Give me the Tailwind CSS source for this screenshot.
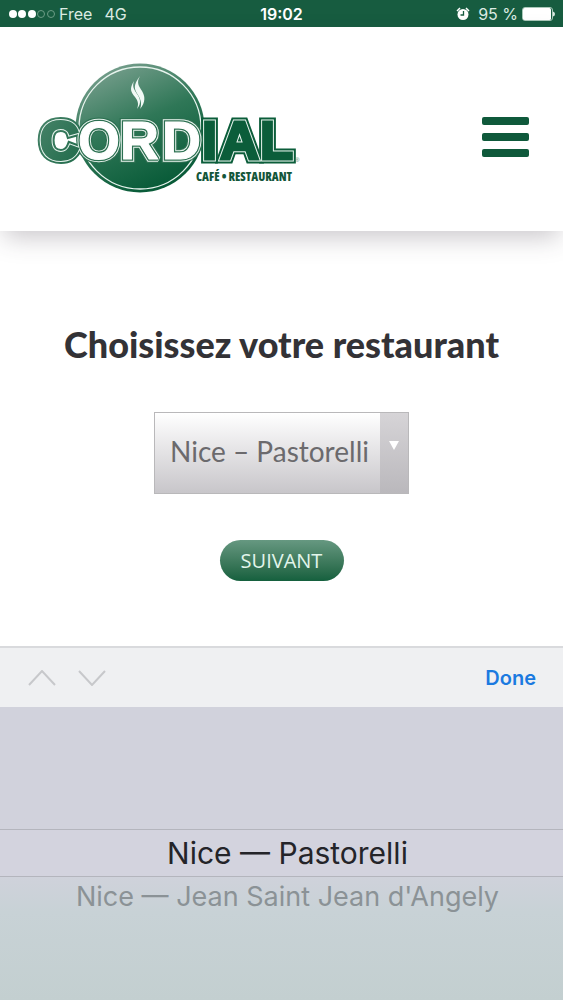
<!DOCTYPE html>
<html lang="fr">
  <head>
    <meta charset="UTF-8" />
    <meta name="viewport" content="width=device-width, initial-scale=1.0" />
    <title>Cordial - Choisissez votre restaurant</title>
    <script src="https://cdn.jsdelivr.net/npm/@tailwindcss/browser@4"></script>
  </head>
  <body class="flex flex-col min-h-screen bg-white font-['Inter',sans-serif]">
    <!-- Status bar -->
    <div class="grid grid-cols-3 items-center h-[27px] px-2 bg-[#175c40] text-white text-base">
      <div class="flex items-center gap-1">
        <svg class="w-[47px] h-3" viewBox="0 0 47 12" fill="#fff" aria-hidden="true">
          <circle cx="5" cy="6" r="4" />
          <circle cx="14" cy="6" r="4" />
          <circle cx="24" cy="6" r="4" />
          <g fill="none" stroke="#6d9d86">
            <circle cx="33" cy="6" r="3.5" />
            <circle cx="43" cy="6" r="3.5" />
          </g>
        </svg>
        <span class="text-[#dcebe3]">Free</span>
        <span class="pl-2 text-[#dcebe3]">4G</span>
      </div>
      <div class="text-center font-semibold">19:02</div>
      <div class="flex items-center justify-end gap-1">
        <svg class="w-[14px] h-[14px] mr-1" viewBox="0 0 14 14" aria-hidden="true">
          <circle cx="7" cy="7.5" r="5.5" fill="#fff" />
          <path d="M1 4 4 1M10 1l3 3" stroke="#fff" stroke-width="1.5" />
          <path d="M7.5 4v4h-3" fill="none" stroke="#175c40" stroke-width="1.3" />
        </svg>
        <span class="text-[#dcebe3]">95 %</span>
        <svg class="w-[33px] h-[14px]" viewBox="0 0 33 14" aria-hidden="true">
          <rect x=".5" y=".5" width="30" height="13" rx="2.5" fill="none" stroke="#a9c8b9" />
          <rect x="1" y="1" width="28" height="12" rx="1.5" fill="#fff" />
          <path d="M31 4.5q2 .5 2 2.5t-2 2.5z" fill="#dcebe3" />
        </svg>
      </div>
    </div>

    <!-- Header -->
    <header class="flex items-center justify-between h-[204px] px-[34px] bg-white shadow-[0_10px_24px_-4px_rgba(60,50,65,0.28)]">
      <a href="#" aria-label="Cordial Café Restaurant">
        <svg class="w-[270px] h-[140px]" viewBox="34 59 270 140" font-family="Liberation Sans, sans-serif" font-weight="700">
          <defs>
            <linearGradient id="disc" x1=".15" y1="0" x2=".6" y2="1">
              <stop offset="0" stop-color="#7fa393" />
              <stop offset=".5" stop-color="#2f7757" />
              <stop offset="1" stop-color="#075a37" />
            </linearGradient>
            <linearGradient id="letters" gradientUnits="userSpaceOnUse" x1="38" y1="110" x2="120" y2="165">
              <stop offset="0" stop-color="#4a856b" />
              <stop offset="1" stop-color="#0b5d3a" />
            </linearGradient>
            <g id="outer" font-size="54">
              <text x="40 202 220 260" y="159">CIAL</text>
            </g>
            <g id="inner" font-size="54">
              <text x="78 120 162" y="159">ORD</text>
            </g>
          </defs>
          <circle cx="140" cy="128" r="64.5" fill="url(#disc)" />
          <circle cx="140" cy="128" r="61" fill="none" stroke="#e8f4ee" stroke-width="1.3" />
          <g stroke-linejoin="miter" stroke-miterlimit="2">
            <use href="#outer" stroke="url(#letters)" stroke-width="9" />
            <use href="#inner" stroke="#2c7051" stroke-width="8" />
            <use href="#outer" stroke="#e8f4ee" stroke-width="5" />
            <use href="#inner" stroke="#e8f4ee" stroke-width="5.5" />
            <use href="#outer" fill="url(#letters)" stroke="url(#letters)" stroke-width="3" />
            <use href="#inner" stroke="#2c7051" stroke-width="3.6" />
            <use href="#inner" fill="#fff" stroke="#fff" stroke-width="1" />
          </g>
          <g fill="#f1f9f5">
            <path d="M134 81c-5 8-3 11 1 16 3 4 4 7 2 12 5-6 3-11 0-15-3-5-5-7-3-13z" />
            <path d="M140 76c-7 9-6 13-2 19 3 5 4 9 2 14 6-7 5-13 2-18s-6-8-2-15z" />
          </g>
          <text x="196" y="181" font-family="Open Sans, sans-serif" font-stretch="condensed" font-weight="800" font-size="12" fill="#14563a">CAFÉ • RESTAURANT</text>
          <text x="295" y="162" font-size="6" font-weight="400" fill="#4a856b">®</text>
        </svg>
      </a>
      <button type="button" aria-label="Menu" class="flex flex-col gap-2 pt-4">
        <span class="w-[47px] h-2 rounded-[2px] bg-[#0f593b]"></span>
        <span class="w-[47px] h-2 rounded-[2px] bg-[#0f593b]"></span>
        <span class="w-[47px] h-2 rounded-[2px] bg-[#0f593b]"></span>
      </button>
    </header>

    <!-- Restaurant form -->
    <form class="flex flex-col flex-1 items-center pt-[89px]">
      <label for="restaurant" class="font-['Lato',sans-serif] font-black text-[36px] leading-12 text-[#333236]">Choisissez votre restaurant</label>
      <div class="relative mt-11">
        <select
          id="restaurant"
          class="block appearance-none w-[255px] h-[82px] pl-[15px] pr-8 pb-1 border border-[#b9b8ba] bg-linear-to-b from-white to-[#c8c6ca] font-['Lato',sans-serif] text-[28px] text-[#6b6a6d]"
        >
          <option>Nice – Pastorelli</option>
          <option>Nice – Jean Saint Jean d'Angely</option>
        </select>
        <div class="absolute top-px right-px bottom-px flex items-start justify-center w-7 pt-7 bg-linear-to-b from-[#d6d4d7] to-[#bab8bc] pointer-events-none">
          <svg class="w-[10px] h-[9px]" viewBox="0 0 10 9" fill="#fff" aria-hidden="true"><path d="M0 0h10L5 9z" /></svg>
        </div>
      </div>
      <button
        type="submit"
        class="mt-[46px] w-[124px] h-[41px] rounded-full bg-linear-to-b from-[#669881] to-[#14603e] font-['Open_Sans',sans-serif] text-xl text-[#e2f5eb]"
      >
        SUIVANT
      </button>
    </form>

    <!-- Picker toolbar -->
    <div class="flex items-center h-[61px] pl-7 pr-[27px] border-t-2 border-[#d9dadd] bg-[#eff0f2]">
      <button type="button" aria-label="Précédent">
        <svg class="w-7 h-4" viewBox="0 0 28 16" fill="none" stroke="#c7c8cb" stroke-width="2"><path d="M1 15 14 1l13 14" /></svg>
      </button>
      <button type="button" aria-label="Suivant" class="ml-[22px]">
        <svg class="w-7 h-4" viewBox="0 0 28 16" fill="none" stroke="#c7c8cb" stroke-width="2"><path d="M1 1l13 14L27 1" /></svg>
      </button>
      <button type="button" class="ml-auto font-semibold text-[20px] text-[#1b7ae0]">Done</button>
    </div>

    <!-- Picker wheel -->
    <div role="listbox" aria-label="Restaurants" class="flex flex-col h-[293px] pt-[122px] bg-linear-to-b from-[#d1d2dc] from-55% via-[#c8d2d6] via-70% to-[#c3cfd0] text-center">
      <button type="button" role="option" aria-selected="true" class="h-12 pl-3 border-y border-[#b4b5bd] bg-[#d3d3de] text-[30px] text-[#242429]">Nice — Pastorelli</button>
      <button type="button" role="option" aria-selected="false" class="h-9 pl-3 text-[27px] text-[#8b9296]">Nice — Jean Saint Jean d'Angely</button>
    </div>
  </body>
</html>
